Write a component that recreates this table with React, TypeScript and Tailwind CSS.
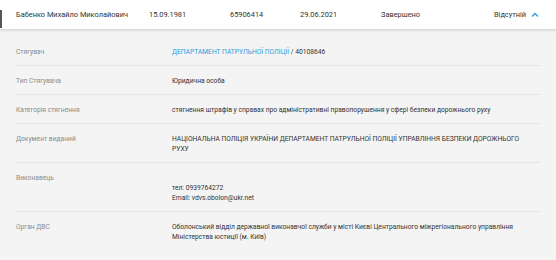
const rows: { label: string; value: React.ReactNode }[] = [
  {
    label: "Стягувач",
    value: (
      <>
        <span className="text-[#2a9fe0]">ДЕПАРТАМЕНТ ПАТРУЛЬНОЇ ПОЛІЦІЇ</span> / 40108646
      </>
    ),
  },
  { label: "Тип Стягувача", value: "Юридична особа" },
  {
    label: "Категорія стягнення",
    value: "стягнення штрафів у справах про адміністративні правопорушення у сфері безпеки дорожнього руху",
  },
  {
    label: "Документ виданий",
    value: "НАЦІОНАЛЬНА ПОЛІЦІЯ УКРАЇНИ ДЕПАРТАМЕНТ ПАТРУЛЬНОЇ ПОЛІЦІЇ УПРАВЛІННЯ БЕЗПЕКИ ДОРОЖНЬОГО РУХУ",
  },
  {
    label: "Виконавець",
    value: (
      <>
        <div className="h-[10px]" />
        <div>тел: 0939764272</div>
        <div>Email: vdvs.obolon@ukr.net</div>
      </>
    ),
  },
  {
    label: "Орган ДВС",
    value:
      "Оболонський відділ державної виконавчої служби у місті Києві Центрального міжрегіонального управління Міністерства юстиції (м. Київ)",
  },
];

export default function App() {
  return (
    <div className="w-[556px] h-[260px] overflow-hidden bg-[#f4f4f4] font-['Roboto',sans-serif]">
      {/* main row */}
      <div className="relative h-[29px] bg-white shadow-[0_1px_3px_rgba(0,0,0,0.18)] flex items-center text-[7.4px] text-[#333] pt-px">
        <div className="absolute left-0 top-[10px] h-[18px] w-[2px] bg-[#555]" />
        <div className="w-[149px] pl-4">Бабенко Михайло Миколайович</div>
        <div className="w-[81px]">15.09.1981</div>
        <div className="w-[70px]">65906414</div>
        <div className="w-[81px]">29.06.2021</div>
        <div className="w-[113px]">Завершено</div>
        <div className="flex items-center gap-[5px]">
          Відсутній
          <svg width="8" height="6" viewBox="0 0 8 6" fill="none">
            <path d="M1 4.5 L4 1.5 L7 4.5" stroke="#2a9fe0" strokeWidth="1.3" />
          </svg>
        </div>
      </div>

      {/* details */}
      <div className="pt-[8px] px-4 text-[6.7px] leading-[10px]">
        {rows.map((r, i) => (
          <div
            key={r.label}
            className={`flex pt-[10px] pb-[8px] ${i < rows.length - 1 ? "border-b border-[#e6e6e6]" : ""}`}
          >
            <div className="w-[156px] shrink-0 text-[#8a8a8a]">{r.label}</div>
            <div className="w-[356px] text-[#333]">{r.value}</div>
          </div>
        ))}
      </div>
    </div>
  );
}
